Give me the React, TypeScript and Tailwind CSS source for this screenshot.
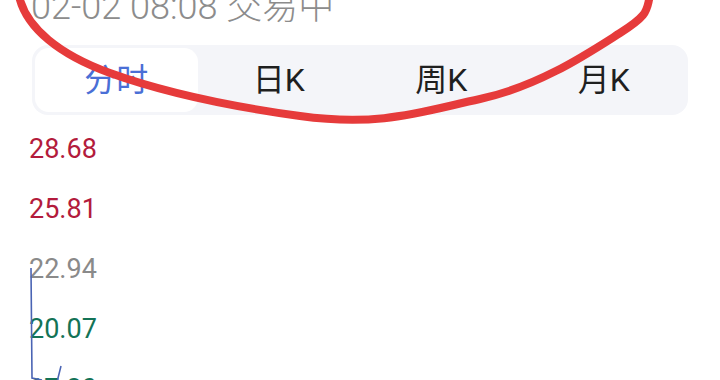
import React from "react";

const tabs = ["分时", "日K", "周K", "月K"];
const labels = [
  { v: "28.68", c: "text-[#b31b3c]" },
  { v: "25.81", c: "text-[#b31b3c]" },
  { v: "22.94", c: "text-[#8a8a8a]" },
  { v: "20.07", c: "text-[#137356]" },
  { v: "17.20", c: "text-[#137356]" },
];

export default function App() {
  return (
    <div
      className="relative w-[720px] h-[380px] overflow-hidden bg-white"
      style={{ fontFamily: 'Roboto, "Noto Sans CJK SC", sans-serif' }}
    >
      <div className="px-[31px] mt-[-11px] h-[36px] text-[36px] leading-[36px] font-light text-[#8c8c8c] whitespace-nowrap">
        02-02 08:08 交易中
      </div>
      <div className="mx-[32px] mt-[20px] h-[70px] rounded-[16px] bg-[#f4f5f9] p-[3px] grid grid-cols-4">
        {tabs.map((t, i) => (
          <div
            key={t}
            className={`flex items-center justify-center rounded-[14px] text-[32px] ${
              i === 0 ? "bg-white text-[#4a6fd6]" : "text-[#1f1f1f]"
            }`}
          >
            {t}
          </div>
        ))}
      </div>
      <div className="mt-[4px] px-[29px] flex flex-col">
        {labels.map((l) => (
          <div key={l.v} className={`h-[60px] flex items-center text-[27px] ${l.c}`}>
            {l.v}
          </div>
        ))}
      </div>
      <svg className="absolute inset-0 pointer-events-none" width="720" height="380" viewBox="0 0 720 380">
        <path d="M31 268 L32 378 L42 380" fill="none" stroke="#4a64b4" strokeWidth="1.6" />
        <path d="M57 382 L61 366" fill="none" stroke="#4a64b4" strokeWidth="1.6" />
        <path
          d="M19 -4 C26 28 60 55 110 73 S220 105 300 116 S420 112 480 99 S590 52 620 33 S646 10 650 -4"
          fill="none"
          stroke="#e63b3b"
          strokeWidth="8"
          strokeLinecap="round"
        />
      </svg>
    </div>
  );
}
